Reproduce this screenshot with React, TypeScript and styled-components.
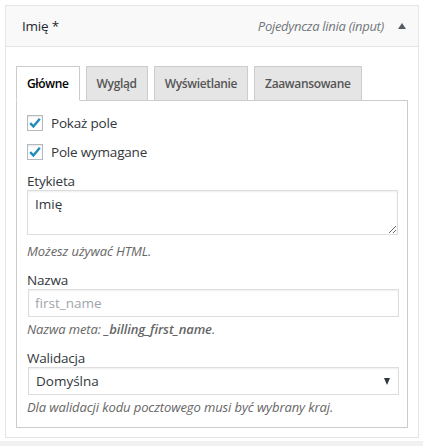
import styled, { createGlobalStyle } from "styled-components";

const Global = createGlobalStyle`
  html, body {
    margin: 0;
    padding: 0;
    background: #ffffff;
  }
  body {
    font-family: "Open Sans", "Noto Sans", sans-serif;
    font-size: 13px;
    color: #32373c;
  }
`;

const Page = styled.div`
  padding: 5px 5px 0 5px;
  min-height: 446px;
  box-sizing: border-box;
  background: linear-gradient(#ffffff 0 441px, #f1f1f1 441px);
`;

const Box = styled.div`
  width: 414px;
  box-sizing: border-box;
  border: 1px solid #e5e5e5;
  background: #ffffff;
`;

const Header = styled.div`
  height: 41px;
  box-sizing: border-box;
  display: flex;
  align-items: center;
  padding: 0 12px 0 16px;
  background: #f9f9f9;
  border-bottom: 1px solid #e5e5e5;
`;

const Title = styled.div`
  flex: 1;
  font-size: 13.5px;
  color: #23282d;
  letter-spacing: -0.2px;
`;

const Kind = styled.div`
  font-style: italic;
  color: #72777c;
  letter-spacing: -0.3px;
  margin-right: 14px;
`;

const Caret = styled.span`
  width: 0;
  height: 0;
  border-left: 4px solid transparent;
  border-right: 4px solid transparent;
  border-bottom: 6px solid #555d66;
`;

const Body = styled.div`
  padding: 19px 10px 9px 10px;
`;

const Tabs = styled.div`
  display: flex;
  gap: 6px;
  margin-bottom: -1px;
  position: relative;
  z-index: 1;
`;

const Tab = styled.div<{ $active?: boolean }>`
  height: 35px;
  box-sizing: border-box;
  padding: 0 10px;
  display: flex;
  align-items: center;
  border: 1px solid #cccccc;
  border-bottom-color: ${(p) => (p.$active ? "#ffffff" : "#cccccc")};
  background: ${(p) => (p.$active ? "#ffffff" : "#e5e5e5")};
  color: ${(p) => (p.$active ? "#000000" : "#555555")};
  font-weight: 600;
  font-size: 12px;
  letter-spacing: -0.35px;
`;

const Panel = styled.div`
  border: 1px solid #cccccc;
  padding: 12px 10px 11px 10px;
`;

const CheckRow = styled.label`
  display: flex;
  align-items: center;
  height: 20px;
  gap: 8px;
  & + & {
    margin-top: 9px;
  }
`;

const CheckBox = styled.span`
  width: 16px;
  height: 16px;
  box-sizing: border-box;
  border: 1px solid #b4b9be;
  box-shadow: inset 0 1px 2px rgba(0, 0, 0, 0.1);
  background: #ffffff;
  display: flex;
  align-items: center;
  justify-content: center;
`;

const CheckText = styled.span`
  font-size: 13.5px;
  color: #32373c;
  letter-spacing: -0.2px;
`;

const Field = styled.div<{ $first?: boolean }>`
  margin-top: ${(p) => (p.$first ? "11px" : "12px")};
`;

const Label = styled.div`
  font-size: 13.5px;
  line-height: 17px;
  color: #32373c;
  letter-spacing: -0.2px;
`;

const Area = styled.textarea`
  display: block;
  width: 371px;
  height: 45px;
  box-sizing: border-box;
  margin: 0;
  padding: 4px 7px;
  border: 1px solid #dddddd;
  box-shadow: inset 0 1px 2px rgba(0, 0, 0, 0.07);
  font-family: "Open Sans", "Noto Sans", sans-serif;
  font-size: 13.5px;
  color: #32373c;
  resize: vertical;
  outline: none;
`;

const Input = styled.input`
  display: block;
  width: 371px;
  height: 28px;
  box-sizing: border-box;
  margin: 0 0 0 1px;
  padding: 0 6px;
  border: 1px solid #dddddd;
  box-shadow: inset 0 1px 2px rgba(0, 0, 0, 0.07);
  font-family: "Open Sans", "Noto Sans", sans-serif;
  font-size: 13.5px;
  color: #32373c;
  outline: none;
  &::placeholder {
    color: #a0a5aa;
  }
`;

const Select = styled.div`
  width: 371px;
  height: 28px;
  box-sizing: border-box;
  margin-left: 1px;
  padding: 0 8px 0 7px;
  border: 1px solid #dddddd;
  box-shadow: inset 0 1px 2px rgba(0, 0, 0, 0.07);
  display: flex;
  align-items: center;
  justify-content: space-between;
  font-size: 13.5px;
  color: #32373c;
`;

const Arrow = styled.span`
  width: 0;
  height: 0;
  border-left: 3.5px solid transparent;
  border-right: 3.5px solid transparent;
  border-top: 7px solid #32373c;
`;

const Desc = styled.div<{ $gap: number }>`
  margin-top: ${(p) => p.$gap}px;
  line-height: 18px;
  font-style: italic;
  color: #666666;
  letter-spacing: -0.1px;
  b {
    font-weight: 600;
  }
`;

function Check() {
  return (
    <CheckBox>
      <svg width="14" height="14" viewBox="0 0 14 14">
        <path d="M2.2 7.2 L5.4 10.4 L11.8 2.8" fill="none" stroke="#1e8cbe" strokeWidth="2.4" />
      </svg>
    </CheckBox>
  );
}

export default function App() {
  return (
    <Page>
      <Global />
      <Box>
        <Header>
          <Title>Imię *</Title>
          <Kind>Pojedyncza linia (input)</Kind>
          <Caret />
        </Header>
        <Body>
          <Tabs>
            {["Główne", "Wygląd", "Wyświetlanie", "Zaawansowane"].map((t, i) => (
              <Tab key={t} $active={i === 0}>
                {t}
              </Tab>
            ))}
          </Tabs>
          <Panel>
            <CheckRow>
              <Check />
              <CheckText>Pokaż pole</CheckText>
            </CheckRow>
            <CheckRow>
              <Check />
              <CheckText>Pole wymagane</CheckText>
            </CheckRow>

            <Field $first>
              <Label>Etykieta</Label>
              <Area defaultValue="Imię" />
              <Desc $gap={7}>Możesz używać HTML.</Desc>
            </Field>

            <Field>
              <Label>Nazwa</Label>
              <Input placeholder="first_name" />
              <Desc $gap={3}>
                Nazwa meta: <b>_billing_first_name</b>.
              </Desc>
            </Field>

            <Field>
              <Label>Walidacja</Label>
              <Select>
                <span>Domyślna</span>
                <Arrow />
              </Select>
              <Desc $gap={3}>Dla walidacji kodu pocztowego musi być wybrany kraj.</Desc>
            </Field>
          </Panel>
        </Body>
      </Box>
    </Page>
  );
}
